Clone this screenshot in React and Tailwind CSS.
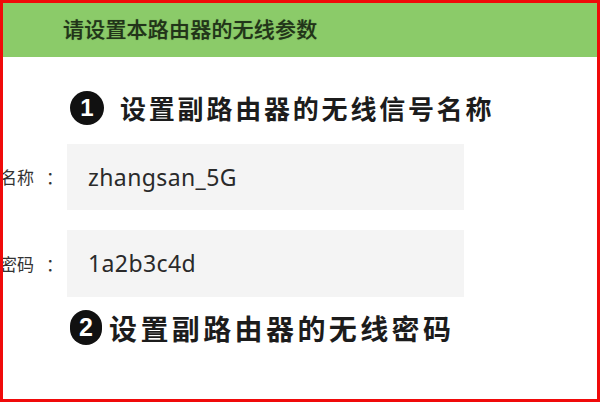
export default function App() {
  const cjk = { fontFamily: '"Noto Sans CJK SC", "Noto Sans", sans-serif' };
  return (
    <div className="w-[600px] h-[402px] bg-white border-[3px] border-[#f00a0a] flex flex-col overflow-hidden" style={cjk}>
      {/* title bar */}
      <div className="h-[54px] shrink-0 bg-[#8bcb69] flex items-center pl-[60px] pb-[4px]">
        <span className="text-[21px] font-medium leading-none text-[#22341a] tracking-[0.2px] [text-shadow:0_0_1px_#4d7a36]">
          请设置本路由器的无线参数
        </span>
      </div>

      {/* step 1 */}
      <div className="flex items-center pl-[67px] mt-[34px] h-[34px]">
        <span className="w-[34px] h-[34px] rounded-full bg-[#111] text-white flex items-center justify-center text-[24px] font-bold leading-none font-['Liberation_Sans',sans-serif]">
          1
        </span>
        <span className="ml-[16px] text-[26px] font-semibold leading-none text-[#1c1c1c] tracking-[2.8px]">
          设置副路由器的无线信号名称
        </span>
      </div>

      {/* fields */}
      <div className="flex flex-col gap-[20px] mt-[19px]">
        <div className="flex items-center">
          <div className="w-[64px] shrink-0 flex justify-end pr-[4px] overflow-hidden whitespace-nowrap text-[17px] text-[#333]">
            <span className="shrink-0">名称</span>
            <span className="shrink-0 ml-[12px]">：</span>
          </div>
          <div className="w-[397px] h-[66px] bg-[#f4f4f4] flex items-center pl-[21px]">
            <span className="text-[23px] text-[#2a2a2a] font-['Noto_Sans',sans-serif] tracking-[0.4px]">zhangsan_5G</span>
          </div>
        </div>
        <div className="flex items-center">
          <div className="w-[64px] shrink-0 flex justify-end pr-[4px] overflow-hidden whitespace-nowrap text-[17px] text-[#333]">
            <span className="shrink-0">密码</span>
            <span className="shrink-0 ml-[12px]">：</span>
          </div>
          <div className="w-[397px] h-[67px] bg-[#f4f4f4] flex items-center pl-[21px]">
            <span className="text-[23px] text-[#2a2a2a] font-['Noto_Sans',sans-serif] tracking-[0.4px]">1a2b3c4d</span>
          </div>
        </div>
      </div>

      {/* step 2 */}
      <div className="flex items-center pl-[67px] mt-[13px] h-[35px]">
        <span className="w-[32px] h-[35px] rounded-full bg-[#111] text-white flex items-center justify-center text-[25px] font-bold leading-none font-['Liberation_Sans',sans-serif]">
          2
        </span>
        <span className="ml-[7px] text-[28px] font-semibold leading-none text-[#1c1c1c] tracking-[3.4px]">
          设置副路由器的无线密码
        </span>
      </div>
    </div>
  );
}
